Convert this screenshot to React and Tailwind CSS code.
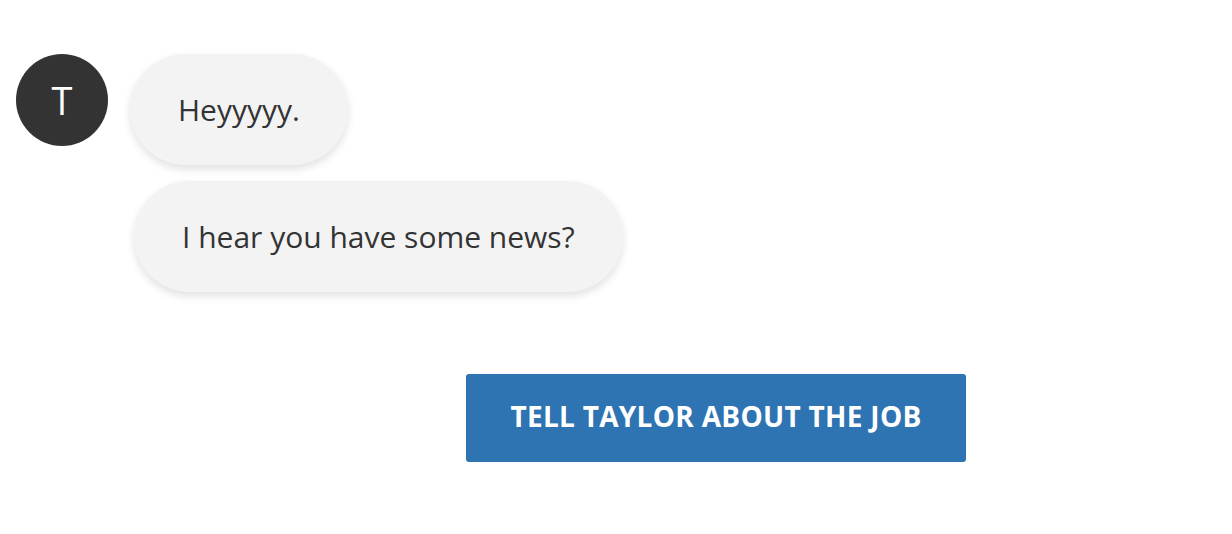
export default function App() {
  const font = { fontFamily: '"Open Sans", "Noto Sans", sans-serif' };
  return (
    <div className="w-[1232px] h-[534px] bg-white relative overflow-hidden" style={font}>
      <div className="flex items-start pt-[54px] pl-[16px] gap-[22px]">
        <div className="w-[92px] h-[92px] rounded-full bg-[#333333] flex items-center justify-center text-white text-[38px] font-normal leading-none shrink-0">
          T
        </div>
        <div className="flex flex-col items-start gap-[16px]">
          <div className="h-[111px] px-[48px] rounded-full bg-[#f3f3f3] flex items-center text-[30px] font-medium text-[#333333] shadow-[0_4px_8px_rgba(0,0,0,0.12)]">
            Heyyyyy.
          </div>
          <div className="ml-[4px] h-[111px] px-[48px] rounded-full bg-[#f3f3f3] flex items-center text-[30px] font-medium text-[#333333] shadow-[0_4px_8px_rgba(0,0,0,0.12)]">
            I hear you have some news?
          </div>
        </div>
      </div>
      <div className="mt-[82px] ml-[466px]">
        <button className="w-[500px] h-[88px] pb-[4px] rounded-[3px] bg-[#2e73b2] text-white font-bold text-[28px] tracking-[0.3px] flex items-center justify-center">
          TELL TAYLOR ABOUT THE JOB
        </button>
      </div>
    </div>
  );
}
